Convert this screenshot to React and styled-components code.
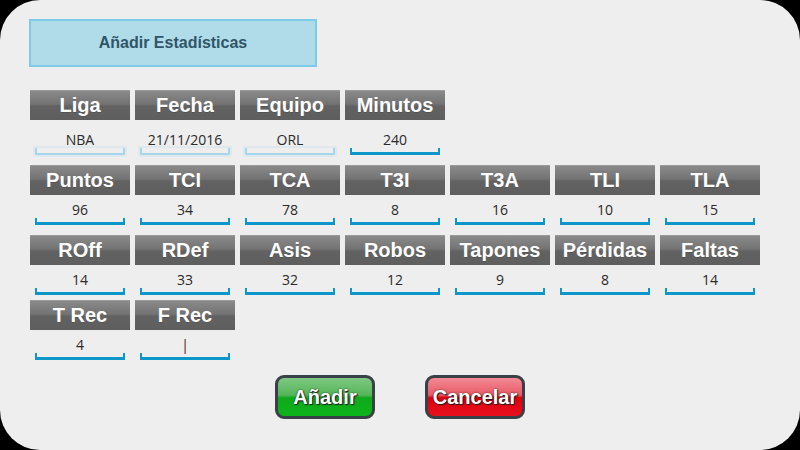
import React from "react";
import styled, { createGlobalStyle } from "styled-components";

const GlobalStyle = createGlobalStyle`
  html, body {
    margin: 0;
    padding: 0;
    background: #000;
  }
  #root {
    width: 800px;
    height: 450px;
  }
`;

const Card = styled.div`
  width: 800px;
  height: 450px;
  box-sizing: border-box;
  background: #eeeeee;
  border-radius: 40px;
  padding: 19px 0 0 30px;
  display: flex;
  flex-direction: column;
`;

const Title = styled.div`
  width: 288px;
  height: 48px;
  box-sizing: border-box;
  margin-left: -1px;
  background: #b0dcea;
  border: 2px solid #7ccbe8;
  display: flex;
  align-items: center;
  justify-content: center;
  font-family: "Liberation Sans", Arial, sans-serif;
  font-weight: bold;
  font-size: 16px;
  color: #2f5567;
`;

const Grid = styled.div`
  margin-top: 23px;
  display: flex;
  flex-direction: column;
`;

const Row = styled.div`
  display: flex;
  gap: 5px;
  margin-bottom: ${(p) => p.$after}px;
`;

const Cell = styled.div`
  width: 100px;
  display: flex;
  flex-direction: column;
`;

const Header = styled.div`
  height: 30px;
  box-sizing: border-box;
  border-top: 1px solid #9a9a9a;
  background: linear-gradient(#8a8a8a 0%, #737373 45%, #626262 52%, #5e5e5e 100%);
  display: flex;
  align-items: center;
  justify-content: center;
  font-family: "Liberation Sans", Arial, sans-serif;
  font-weight: bold;
  font-size: 20px;
  color: #fff;
  text-shadow: 0 1px 0 rgba(0, 0, 0, 0.15);
`;

const ValueBox = styled.div`
  height: ${(p) => p.$h}px;
  display: flex;
  flex-direction: column;
  justify-content: flex-end;
  box-sizing: border-box;
`;

const Value = styled.div`
  height: 16px;
  line-height: 16px;
  text-align: center;
  font-family: "Open Sans", "Noto Sans", sans-serif;
  font-size: 14px;
  color: ${(p) => (p.$caret ? "#4a1010" : "#2a2a2a")};
`;

const Bracket = styled.div`
  height: 7px;
  margin: 0 5px;
  box-sizing: border-box;
  border: 2px solid ${(p) => (p.$disabled ? "#a6d6ea" : "#0d97c9")};
  border-bottom-width: 3px;
  border-top: none;
  ${(p) =>
    p.$disabled &&
    `
    border-bottom-width: 2px;
    border-radius: 0 0 2px 2px;
    box-shadow: 0 0 0 2px #dfe8ec;
  `}
`;

const Actions = styled.div`
  margin-top: 15px;
  margin-left: -30px;
  display: flex;
  justify-content: center;
  gap: 50px;
`;

const Button = styled.button`
  width: 100px;
  height: 44px;
  box-sizing: border-box;
  border: 3px solid #3b3f46;
  border-radius: 9px;
  padding: 0;
  font-family: "Liberation Sans", Arial, sans-serif;
  font-weight: bold;
  font-size: 20px;
  color: #fff;
  text-shadow: 0 0 2px rgba(0, 0, 0, 0.7), 1px 1px 1px #222;
  background: ${(p) =>
    p.$tone === "green"
      ? "linear-gradient(#7fc882 0%, #55b65a 45%, #10a81c 52%, #0cb41a 100%)"
      : "linear-gradient(#f28a94 0%, #e85a67 45%, #dd000f 52%, #e8101c 100%)"};
`;

const rows = [
  {
    h: 35,
    after: 10,
    cells: [
      ["Liga", "NBA", true],
      ["Fecha", "21/11/2016", true],
      ["Equipo", "ORL", true],
      ["Minutos", "240"],
    ],
  },
  {
    h: 30,
    after: 10,
    cells: [
      ["Puntos", "96"],
      ["TCI", "34"],
      ["TCA", "78"],
      ["T3I", "8"],
      ["T3A", "16"],
      ["TLI", "10"],
      ["TLA", "15"],
    ],
  },
  {
    h: 30,
    after: 5,
    cells: [
      ["ROff", "14"],
      ["RDef", "33"],
      ["Asis", "32"],
      ["Robos", "12"],
      ["Tapones", "9"],
      ["Pérdidas", "8"],
      ["Faltas", "14"],
    ],
  },
  {
    h: 30,
    after: 0,
    cells: [
      ["T Rec", "4"],
      ["F Rec", "|"],
    ],
  },
];

export default function App() {
  return (
    <>
      <GlobalStyle />
      <Card>
        <Title>Añadir Estadísticas</Title>
        <Grid>
          {rows.map((row, i) => (
            <Row key={i} $after={row.after}>
              {row.cells.map(([label, value, disabled]) => (
                <Cell key={label}>
                  <Header>{label}</Header>
                  <ValueBox $h={row.h}>
                    <Value $caret={value === "|"}>{value}</Value>
                    <Bracket $disabled={disabled} />
                  </ValueBox>
                </Cell>
              ))}
            </Row>
          ))}
        </Grid>
        <Actions>
          <Button $tone="green">Añadir</Button>
          <Button $tone="red">Cancelar</Button>
        </Actions>
      </Card>
    </>
  );
}
